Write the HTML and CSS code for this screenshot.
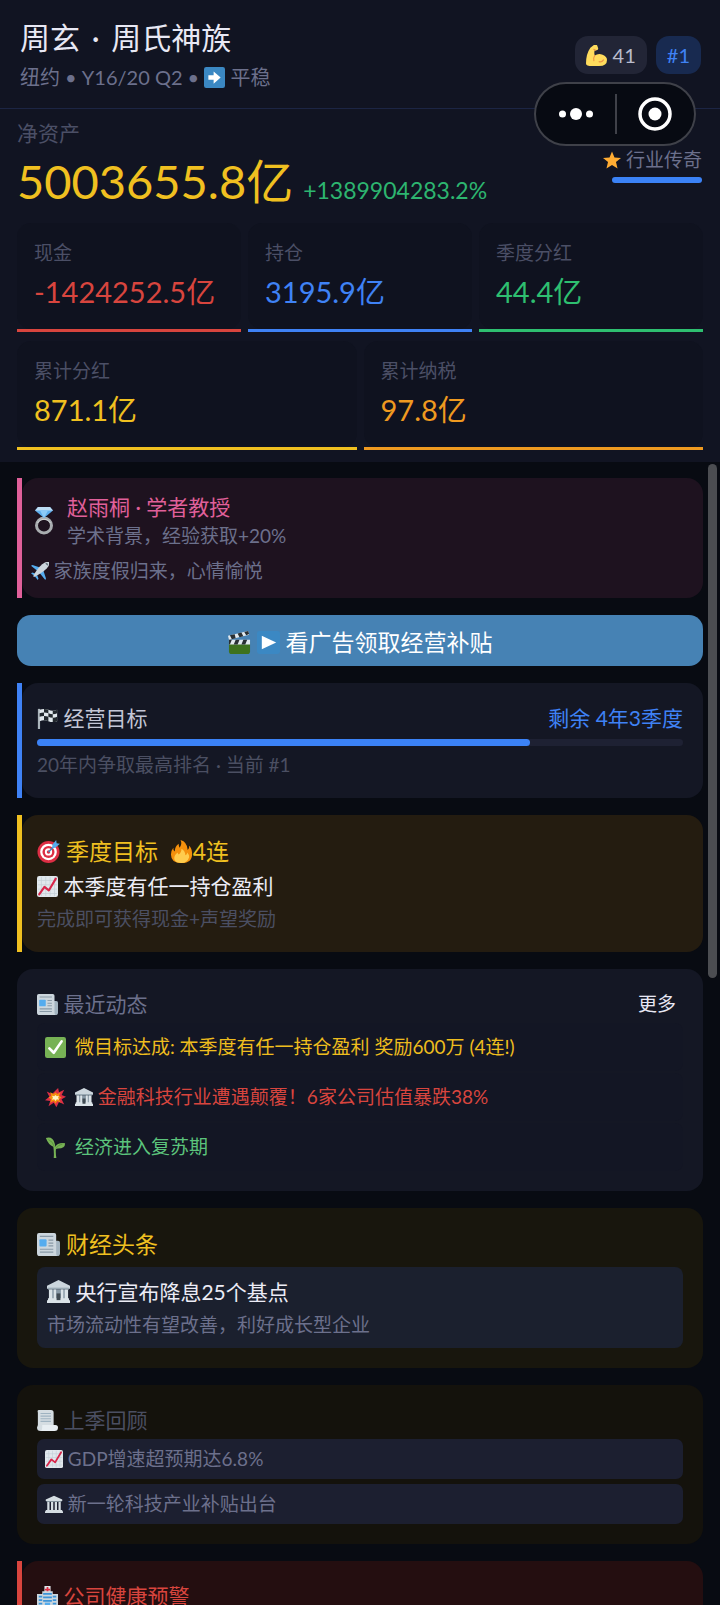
FILE: index.html
```html
<!DOCTYPE html>
<html lang="zh-CN">
<head>
<meta charset="utf-8">
<meta name="viewport" content="width=device-width, initial-scale=1">
<title>周玄 · 周氏神族</title>
<link rel="stylesheet" href="styles.css">
</head>
<body>
<svg class="sprite" aria-hidden="true">
  <symbol id="i-news" viewBox="0 0 24 24">
    <path fill="#a3b4c0" d="M18 8h4q2 0 2 2v11q0 3-3 3H5z"/>
    <path fill="#ccd6dd" d="M2 0h16q2 0 2 2v19q0 2 1 3H3q-3 0-3-3V2q0-2 2-2z"/>
    <path stroke="#8899a6" stroke-width="1.2" d="M3 3.500h14M12 7.500h5M12 10.500h5M12 13.500h5M3 17h14M3 20h14"/>
    <rect x="2.500" y="6.500" width="7.500" height="7.500" rx="1" fill="#55acee"/>
  </symbol>
  <symbol id="i-chart" viewBox="0 0 24 24">
    <rect width="24" height="24" rx="2.500" fill="#e1e8ed"/>
    <path stroke="#c3ced6" stroke-width=".8" d="M5 1v22M10 1v22M15 1v22M20 1v22M1 5h22M1 10h22M1 15h22M1 20h22"/>
    <path fill="none" stroke="#d8264a" stroke-width="2.400" stroke-linecap="round" stroke-linejoin="round" d="M2.500 21l6-8.500 5 4L21.500 3"/>
  </symbol>
  <symbol id="i-bank" viewBox="0 0 24 24">
    <path fill="#ccd6dd" d="M12 0L24 6v3H0V6z"/>
    <path fill="#9aaab4" d="M1 8h22v2H1z"/>
    <path fill="#8899a6" d="M3 10h18v10H3z"/>
    <path fill="#dbe3e8" d="M2 10h3.500v10H2zM7 10h2.500v10H7zM14.500 10H17v10h-2.500zM18.500 10H22v10h-3.500zM1 19h22v2H1zM0 21h24v3H0z"/>
    <path fill="#414b53" d="M10 14h4v7h-4z"/>
  </symbol>
  <symbol id="i-columns" viewBox="0 0 24 24">
    <path fill="#d5dde2" d="M12 1L23 6v2H1V6zM3 9h3v11H3zM8 9h3v11H8zM13 9h3v11h-3zM18 9h3v11h-3zM1 20h22v1.500H1zM0 21.500h24V24H0z"/>
    <path fill="#8b9aa4" d="M2 8h20v1.200H2z"/>
  </symbol>
</svg>

<div class="app">
  <div class="summary">
    <header class="topbar">
      <div>
        <h1 class="name">周玄 <span class="dot">·</span> 周氏神族</h1>
        <p class="status">纽约 • Y16/20 Q2 •
          <svg class="icon-m" viewBox="0 0 24 24"><rect width="24" height="24" rx="2.500" fill="#3b88c3"/><path fill="#fff" d="M5 9.500h6V5l8 7-8 7v-4.500H5z"/></svg>
          平稳</p>
      </div>
      <div class="badges">
        <span class="badge"><svg class="icon-m" viewBox="0 0 24 24"><path fill="#ffdc5d" d="M5 3l4-3q3-1 4 1l1 3q0 2-2 2l-2 0q-1 3 0 6 4-3 9-1 5 2 5 6 0 7-9 7H7q-7 0-7-3Q0 10 5 3z"/><path fill="none" stroke="#ef9645" stroke-width="1.300" stroke-linecap="round" d="M9 18q-1-3 1-6M15 19q3 1 5-2M9 5l2 1"/></svg> 41</span>
        <span class="badge badge-rank">#1</span>
      </div>
    </header>

    <section class="worth">
      <div>
        <p class="worth-label">净资产</p>
        <p class="worth-line"><strong class="worth-value">5003655.8亿</strong> <span class="worth-change">+1389904283.2%</span></p>
      </div>
      <div class="rank">
        <span class="rank-title"><svg class="icon-s" viewBox="0 0 24 24"><path fill="#ffac33" d="M12 .5l3.300 8.100 8.700.6-6.700 5.600 2.100 8.500L12 18.700l-7.400 4.600 2.100-8.500L0 9.200l8.700-.6z"/></svg> 行业传奇</span>
        <span class="rank-bar"></span>
      </div>
    </section>

    <section class="stats">
      <div class="stats-row">
        <div class="stat red"><div class="stat-panel"><span class="stat-label">现金</span><span class="stat-value">-1424252.5亿</span></div></div>
        <div class="stat blue"><div class="stat-panel"><span class="stat-label">持仓</span><span class="stat-value">3195.9亿</span></div></div>
        <div class="stat green"><div class="stat-panel"><span class="stat-label">季度分红</span><span class="stat-value">44.4亿</span></div></div>
      </div>
      <div class="stats-row">
        <div class="stat gold"><div class="stat-panel"><span class="stat-label">累计分红</span><span class="stat-value">871.1亿</span></div></div>
        <div class="stat orange"><div class="stat-panel"><span class="stat-label">累计纳税</span><span class="stat-value">97.8亿</span></div></div>
      </div>
    </section>
  </div>

  <div class="capsule">
    <button class="capsule-btn" aria-label="菜单"><svg width="34" height="12" viewBox="0 0 34 12" fill="#fff"><circle cx="3.500" cy="6" r="3.500"/><circle cx="17" cy="6" r="6"/><circle cx="30.500" cy="6" r="3.500"/></svg></button>
    <button class="capsule-btn" aria-label="关闭"><svg width="34" height="34" viewBox="0 0 34 34"><circle cx="17" cy="17" r="15" fill="none" stroke="#fff" stroke-width="3.500"/><circle cx="17" cy="17" r="6.500" fill="#fff"/></svg></button>
  </div>

  <main class="feed">
    <article class="accent pink">
      <div class="panel spouse">
        <div class="spouse-top">
          <svg class="ring" viewBox="0 0 18 28"><circle cx="9" cy="18.500" r="7.500" fill="none" stroke="#a9adb0" stroke-width="3"/><path fill="none" stroke="#d5d8da" stroke-width="1" d="M2.500 16a7.500 7.500 0 0 1 13 0"/><path fill="#5dadec" d="M3 0h12l3 3.500L9 11 0 3.500z"/><path fill="#bdddf4" d="M3 0h12l3 3.500H0z"/><path fill="#8ccaf7" d="M5 3.500h8L9 11z"/></svg>
          <div>
            <h2 class="title title-pink">赵雨桐 · 学者教授</h2>
            <p class="note spouse-note">学术背景，经验获取+20%</p>
          </div>
        </div>
        <p class="note spouse-event"><svg class="icon-s" viewBox="0 0 24 24"><path fill="#55acee" d="M0 5l2-1 12 4-4 5zM19 24l1-2-4-12-5 4zM0 15l2-1 5 2-2 3zM9 24l1-2-2-5-3 2z"/><path fill="#ccd6dd" d="M18 1q4-2 6-1 1 2-1 6-3 5-15 12l-4 2-1-1 2-4Q12 4 18 1z"/><path fill="#66757f" d="M19 2l3 3 1-2-2-2z"/></svg> 家族度假归来，心情愉悦</p>
      </div>
    </article>

    <button class="ad">
      <svg class="icon-l" viewBox="0 0 24 24"><path fill="#3e721d" d="M1 11h22v10q0 3-3 3H4q-3 0-3-3z"/><path fill="#e1e8ed" d="M0 5L21 0l1 4L1 9zM1 9h22v5H1z"/><path fill="#292f33" d="M3 4.300l4-1 1 4.200-4 1-2-4zM10 2.600l4-1 2 4-4 .9zM17 1l4-1 1 3-3 1.500zM1 9h3l-2 5H1zM8 9h4l-2 5H6zM16 9h4l-2 5h-4z"/></svg>
      <svg class="icon-l" viewBox="0 0 24 24"><rect width="24" height="24" rx="2.500" fill="#3b88c3"/><path fill="#fff" d="M5 5l15 7-15 7z"/></svg>
      看广告领取经营补贴
    </button>

    <article class="accent blue">
      <div class="panel">
        <div class="row">
          <h2 class="title"><svg class="icon-m" viewBox="0 0 24 24"><path fill="#aab4bb" d="M1 1h2.500v23H1z"/><path fill="#e1e8ed" d="M3 2q5-2 10 0t10 0v13q-5 2-10 0t-10 0z"/><path fill="#22282d" d="M8 1q3 0 5 1v4q-2-1-5-1zM18 3q3 0 5-1v4q-2 1-5 1zM3 6q2-1 5-1v4q-3 0-5 1zM13 6q3 1 5 1v4q-3 0-5-1zM8 9q3 0 5 1v5q-2-1-5-1zM18 11q3 0 5-1v5q-2 1-5 1z"/></svg> 经营目标</h2>
          <span class="title title-blue">剩余 4年3季度</span>
        </div>
        <div class="track"><div class="fill" style="width:76.25%"></div></div>
        <p class="note dim">20年内争取最高排名 · 当前 #1</p>
      </div>
    </article>

    <article class="accent gold">
      <div class="panel goal">
        <h2 class="heading"><svg class="icon-l" viewBox="0 0 24 24"><circle cx="12" cy="12.500" r="11.500" fill="#dd2e44"/><circle cx="12" cy="12.500" r="8.700" fill="#fff"/><circle cx="12" cy="12.500" r="6.300" fill="#dd2e44"/><circle cx="12" cy="12.500" r="3.800" fill="#fff"/><circle cx="12" cy="12.500" r="1.800" fill="#dd2e44"/><path stroke="#3b88c3" stroke-width="1.500" d="M12 12.500L20 4.500"/><path fill="#55acee" d="M16 5l4-5 .5 3.500L24 4l-5 4-3 .5z"/></svg> 季度目标 <span class="streak"><svg class="icon-l" viewBox="0 0 24 24"><path fill="#f4900c" d="M23 13q-.5-5-3-7 .5 3-1.500 4.500Q18 2 11 0q2 4-1 8-1-2-1-4-4 3-4 8Q3 11 3.500 8 1 11 1 15q0 9 11 9 12 0 11-11z"/><path fill="#ffcc4d" d="M20 18q0-3-2-5 0 2-2 3 0-5-4-7 0 4-3 6-1-1-1-2-4 3-3.500 7Q6 24 12 24t8-6z"/></svg>4连</span></h2>
        <p class="title title-white"><svg class="icon-m"><use href="#i-chart"/></svg> 本季度有任一持仓盈利</p>
        <p class="note dim goal-note">完成即可获得现金+声望奖励</p>
      </div>
    </article>

    <article class="panel news">
      <div class="row">
        <h2 class="title title-mute"><svg class="icon-m"><use href="#i-news"/></svg> 最近动态</h2>
        <button class="more">更多</button>
      </div>
      <ul class="events">
        <li class="event c-gold"><svg class="icon-m" viewBox="0 0 24 24"><rect width="24" height="24" rx="2.500" fill="#77b255"/><path fill="none" stroke="#fff" stroke-width="3" stroke-linecap="round" stroke-linejoin="round" d="M5 13l5 5L19 5"/></svg><span>微目标达成: 本季度有任一持仓盈利 奖励600万 (4连!)</span></li>
        <li class="event c-red"><svg class="icon-m" viewBox="0 0 24 24"><path fill="#dd2e44" d="M12 4L15 1l1 5 6-3-3 6 5 2-5 3 3 6-6-3-3 6-3-5-6 4 2-6-6-1 5-4-3-6 6 3z"/><path fill="#f4900c" d="M12 6l2 2 4-2-2 4 3 2-3 2 2 4-4-2-2 3-2-3-4 2 1-4-3-2 3-2-1-4 4 2z"/><path fill="#fff3c4" d="M12 9l1.500 1.500L16 10l-1 2 1 2.500-2.500-.5L12 16l-1.500-2L8 14.500 9 12l-1-2 2.500.5z"/></svg><span><svg class="icon-s"><use href="#i-bank"/></svg> 金融科技行业遭遇颠覆！6家公司估值暴跌38%</span></li>
        <li class="event c-green"><svg class="icon-m" viewBox="0 0 24 24"><path fill="#77b255" d="M1 1q8-2 10 6l1 4q2-5 11-4 0 6-8 6-2 0-2.500 1-.5 4 .5 10h-3q.5-7-.5-13Q4 9 1 1z"/><path fill="none" stroke="#5c913b" d="M4 3q5 2 6.500 8M20 8q-5 1-7.500 5"/></svg><span>经济进入复苏期</span></li>
      </ul>
    </article>

    <article class="panel headline">
      <h2 class="heading"><svg class="icon-l"><use href="#i-news"/></svg> 财经头条</h2>
      <div class="story">
        <h3 class="title title-white"><svg class="icon-l"><use href="#i-bank"/></svg> 央行宣布降息25个基点</h3>
        <p class="note">市场流动性有望改善，利好成长型企业</p>
      </div>
    </article>

    <article class="panel review">
      <h2 class="title title-dim"><svg class="icon-m" viewBox="0 0 24 24"><path fill="#d5dde2" d="M2 0h14q3 0 3 3v14H7v4q0 3-3 3-4 0-4-4l1-3V3q-1-3 1-3z"/><path fill="#e8eef2" d="M6 17h15q3 0 3 3 0 4-4 4H4q2-1 2-4z"/><path stroke="#9fb3c1" stroke-width="1.300" d="M4 4h12M4 7h12M4 10h12M4 13h12"/></svg> 上季回顾</h2>
      <ul class="recap">
        <li class="note recap-item"><svg class="icon-s"><use href="#i-chart"/></svg> GDP增速超预期达6.8%</li>
        <li class="note recap-item"><svg class="icon-s"><use href="#i-columns"/></svg> 新一轮科技产业补贴出台</li>
      </ul>
    </article>

    <article class="accent red">
      <div class="panel alert">
        <h2 class="title title-red"><svg class="icon-m" viewBox="0 0 24 24"><path fill="#e1e8ed" d="M8.500 0h7v7h-7z"/><path fill="#dd2e44" d="M11 1h2v2h2v2h-2v2h-2V5H9V3h2z"/><path fill="#ccd6dd" d="M6 6h12v3h6v15H0V9h6z"/><path fill="#3b94d9" d="M7 8h10v2H7zM2 11h4v2H2zM18 11h4v2h-4zM7 12h10v2H7zM2 15h4v2H2zM18 15h4v2h-4zM7 16h10v2H7zM2 19h4v2H2zM18 19h4v2h-4z"/><path fill="#55acee" d="M9 19h6v5H9z"/></svg> 公司健康预警</h2>
      </div>
    </article>
    <div class="thumb"></div>
  </main>
</div>
</body>
</html>
```

FILE: styles.css
```css
* { box-sizing: border-box; margin: 0; padding: 0; }

body {
  background: #080b12;
  color: #e8e8f4;
  font-family: Lato, "Noto Sans CJK SC", sans-serif;
  font-weight: 400;
}

h1, h2, h3, strong { font-weight: 400; }
ul { list-style: none; }
button { font: inherit; color: inherit; border: 0; background: none; cursor: pointer; }
.sprite { position: absolute; width: 0; height: 0; }

.icon-s { width: 18px; height: 18px; vertical-align: -2px; }
.icon-m { width: 21px; height: 21px; vertical-align: -3px; }
.icon-l { width: 23px; height: 23px; vertical-align: -3px; }

.app {
  position: relative;
  display: flex;
  flex-direction: column;
  height: 100vh;
  overflow: hidden;
}

/* Summary */
.summary { background: #111422; padding-bottom: 12px; }
.topbar {
  display: flex;
  justify-content: space-between;
  align-items: center;
  padding: 19px 19px 17px 20px;
  border-bottom: 1px solid #1c2544;
}
.name { font-size: 30px; line-height: 36px; }
.dot { margin: 0 4px; }
.status { margin-top: 8px; font-size: 20px; line-height: 28px; color: #6c708c; }
.badges { display: flex; gap: 9px; }
.badge {
  padding: 0 11px;
  border-radius: 13px;
  background: #222536;
  color: #b9bccc;
  font-size: 20px;
  line-height: 38px;
}
.badge-rank { background: #182a50; color: #3f82f5; }

.worth {
  display: flex;
  justify-content: space-between;
  align-items: center;
  padding: 12px 18px 0 17px;
}
.worth-label { font-size: 21px; line-height: 24px; color: #4b4f66; }
.worth-line {
  display: flex;
  align-items: baseline;
  gap: 10px;
  margin-top: 8px;
  white-space: nowrap;
}
.worth-value { font-size: 47px; line-height: 56px; color: #f0c020; }
.worth-change { font-size: 23px; line-height: 30px; color: #2db570; }
.rank { display: flex; flex-direction: column; align-items: flex-end; gap: 4px; }
.rank-title { font-size: 19px; line-height: 26px; color: #6c708c; }
.rank-bar { width: 90px; height: 6px; border-radius: 3px; background: #3b82f6; }

.stats { display: flex; flex-direction: column; gap: 9px; padding: 14px 17px 0; }
.stats-row { display: flex; gap: 7px; }
.stat { flex: 1; min-width: 0; border-bottom: 3px solid; }
.stat-panel {
  display: flex;
  flex-direction: column;
  gap: 9px;
  padding: 18px 17px 19px;
  border-radius: 14px;
  background: #0f121f;
}
.stat-label { font-size: 19px; line-height: 24px; color: #4b4f66; }
.stat-value { font-size: 29px; line-height: 36px; white-space: nowrap; }
.red { color: #d8453e; }
.blue { color: #3f82f5; }
.green { color: #2ebf70; }
.gold { color: #f0c020; }
.orange { color: #ef9a20; }
.pink { color: #e0609a; }

/* Floating window controls */
.capsule {
  position: absolute;
  top: 82px;
  right: 24px;
  display: flex;
  width: 162px;
  height: 64px;
  border: 2px solid #3f4149;
  border-radius: 32px;
  background: #070a12;
}
.capsule-btn { flex: 1; display: grid; place-items: center; position: relative; }
.capsule-btn + .capsule-btn::before {
  content: "";
  position: absolute;
  left: 0;
  top: 10px;
  bottom: 10px;
  width: 2px;
  background: #3f4149;
}

/* Feed */
.feed {
  position: relative;
  flex: 1;
  min-height: 0;
  display: flex;
  flex-direction: column;
  gap: 17px;
  padding: 16px 17px 0;
  overflow: hidden;
}
.feed > * { flex-shrink: 0; }
.thumb {
  position: absolute;
  top: 2px;
  right: 3px;
  width: 9px;
  height: 514px;
  border-radius: 5px;
  background: #4b4d51;
}
.accent { border-left: 5px solid; }
.panel { padding: 20px; border-radius: 16px; background: #141724; }
.accent > .panel { padding-left: 15px; }
.row { display: flex; justify-content: space-between; align-items: center; }

.title { font-size: 21px; line-height: 30px; color: #c3c6d6; }
.heading { font-size: 23px; line-height: 32px; color: #f0c020; }
.note { font-size: 19px; line-height: 26px; color: #6c708c; }
.dim, .title-dim { color: #4b4f62; }
.title-blue { color: #3f82f5; }
.title-pink { color: #e0609a; }
.title-white { color: #ececf6; }
.title-mute { color: #6c708c; }
.title-red { color: #d8453e; }

.accent > .spouse { padding: 14px 9px; background: #1e121f; }
.spouse-top { display: flex; align-items: center; gap: 14px; padding-left: 4px; }
.ring { width: 18px; height: 28px; }
.spouse-note { line-height: 28px; }
.spouse-event { margin-top: 8px; }

.ad {
  height: 51px;
  border-radius: 14px;
  background: #4682b4;
  color: #fff;
  font-size: 23px;
}

.track { height: 7px; margin: 6px 0; border-radius: 4px; background: #1e2133; }
.fill { height: 100%; border-radius: 4px; background: #3b82f6; }

.goal { display: flex; flex-direction: column; gap: 4px; background: #241c10; }
.goal-note { margin-top: 1px; }
.streak { margin-left: 6px; }

.more { padding: 0 7px; font-size: 19px; line-height: 30px; }
.events { display: flex; flex-direction: column; gap: 2px; margin-top: 4px; }
.event {
  display: flex;
  align-items: center;
  gap: 9px;
  padding: 0 8px;
  border-radius: 8px;
  background: #131624;
  font-size: 19px;
  line-height: 48px;
}
.c-gold { color: #eebd1e; }
.c-red { color: #d8453e; }
.c-green { color: #5cc47c; }

.headline { background: #18160d; }
.story { margin-top: 7px; padding: 10px; border-radius: 8px; background: #1b202e; }
.story .note { margin-top: 5px; }

.review { background: #14120c; }
.recap { display: flex; flex-direction: column; gap: 5px; margin-top: 4px; }
.recap-item { padding: 7px 8px; border-radius: 7px; background: #1c1f30; }

.alert { min-height: 160px; background: #240e10; }
```
